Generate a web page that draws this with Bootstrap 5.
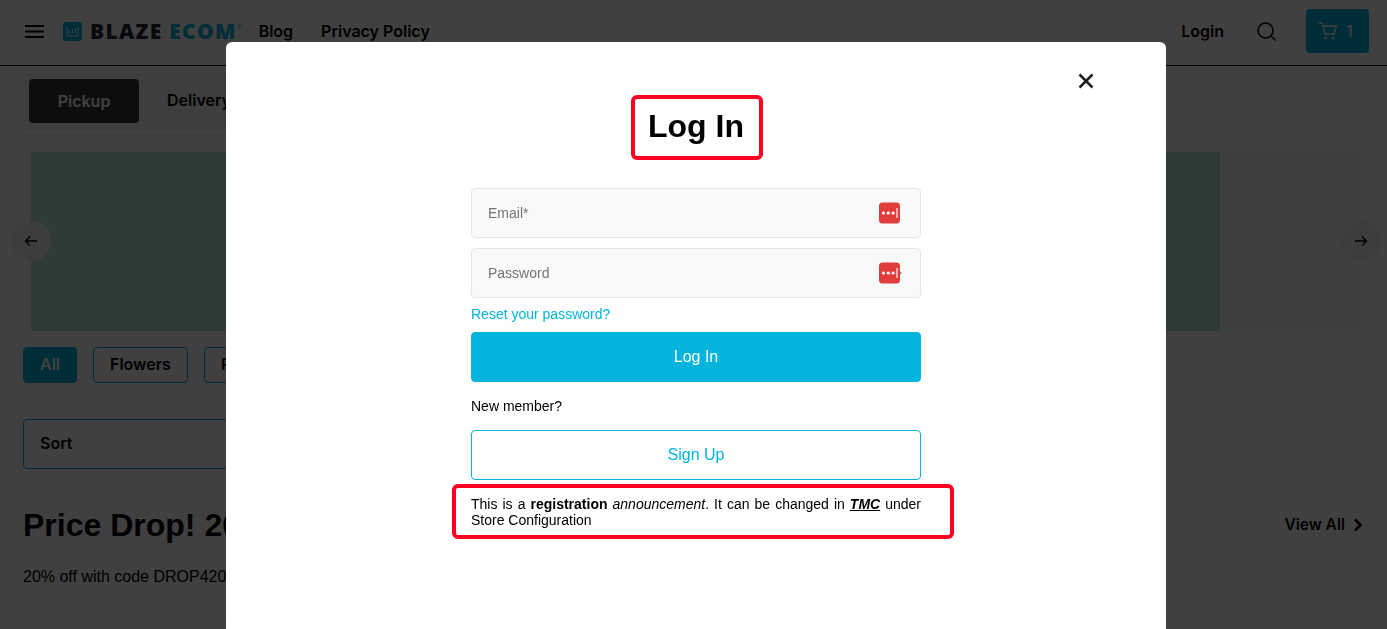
<!DOCTYPE html>
<html lang="en">
<head>
  <meta charset="UTF-8">
  <title>Blaze Ecom – Log In</title>
  <link href="https://cdn.jsdelivr.net/npm/bootstrap@5.3.0/dist/css/bootstrap.min.css" rel="stylesheet">
  <style>
    html, body { height: 100%; overflow: hidden; }
    body {
      background: #fff;
      color: #000;
      font-family: "Liberation Sans", Arial, sans-serif;
      font-size: 14px;
    }

    /* page behind the dialog */
    .top-bar {
      height: 66px;
      padding: 0 18px 3px 25px;
      border-bottom: 1px solid #000;
      font-family: Inter, sans-serif;
      font-weight: 600;
      font-size: 16px;
    }
    .top-bar a { color: #000; text-decoration: none; }
    .brand-text {
      font-family: "Open Sans", sans-serif;
      font-weight: 800;
      font-size: 21px;
      letter-spacing: 1.300px;
      line-height: 1;
      color: #1b2a33;
      white-space: nowrap;
    }
    .brand-text span { color: #03b5dc; }
    .brand-text sup { font-size: 6px; top: -1.6em; letter-spacing: 0; font-weight: 400; color: #03b5dc; }
    .logo-box { width: 19px; height: 19px; border-radius: 3px; background: #03b5dc; margin: 0 8px 0 19px; }
    .blog-link { margin-left: 17px; }
    .policy-link { margin-left: 28px; }
    .login-link { margin-right: 33px; }
    .search-icon { margin-right: 30px; }
    .cart-btn {
      width: 63px;
      height: 44px;
      padding-right: 4px;
      background: #03b5dc;
      color: #fff;
      border-radius: 4px;
      font-weight: 400;
    }
    .sub-bar {
      height: 70px;
      padding: 7px 23px;
      border-bottom: 1px solid #f0f0f0;
      font-family: Inter, sans-serif;
      font-weight: 600;
      font-size: 16px;
    }
    .order-tabs { background: #f8f8f8; padding: 6px; border-radius: 4px; width: 400px; height: 56px; }
    .tab-active {
      width: 110px;
      height: 44px;
      padding-bottom: 1px;
      background: #363636;
      color: #fff;
      border-radius: 4px;
    }
    .tab-plain { margin: 0 0 2px 28px; }
    .hero {
      position: relative;
      height: 179px;
      margin: 16px 26px 0 31px;
      background: #fbfcfb;
      display: flex;
    }
    .hero-art { width: 1189px; background: #b8f0d2; }
    .hero-arrow {
      position: absolute;
      top: 69px;
      width: 40px;
      height: 40px;
      border-radius: 50%;
      background: #f2f2f2;
    }
    .arrow-prev { left: -20px; }
    .arrow-next { right: -20px; }
    .chip-row { padding: 16px 23px 0; font-family: Inter, sans-serif; font-weight: 600; font-size: 16px; gap: 16px; }
    .chip {
      height: 36px;
      padding: 0 16px 2px;
      border: 1px solid #03b5dc;
      border-radius: 4px;
    }
    .chip-on { width: 54px; padding: 0 0 2px; background: #03b5dc; color: #fff; }
    .sort-box {
      width: 400px;
      height: 50px;
      margin: 36px 0 0 23px;
      padding: 0 0 2px 16px;
      border: 1px solid #03b5dc;
      border-radius: 4px;
      font-family: Inter, sans-serif;
      font-weight: 600;
      font-size: 16px;
    }
    .promo-head { margin: 36px 24px 0 23px; height: 40px; }
    .promo-head h2 { font-size: 32px; font-weight: 700; margin: 0; line-height: 40px; }
    .view-all { font-family: Inter, sans-serif; font-weight: 600; font-size: 15.500px; gap: 8px; }
    .promo-note { margin: 20px 0 0 23px; font-size: 16px; line-height: 24px; }
    .next-card { margin: 27px 23px 0; border-top: 1px solid #f4f4f4; }

    /* log in dialog */
    .modal-backdrop.show { opacity: .75; }
    .login-modal { display: block; }
    .login-dialog {
      width: 940px;
      max-width: 940px;
      margin: 42px 0 0 226px;
    }
    .login-sheet {
      position: relative;
      height: 700px;
      padding-top: 53px;
      border: 0;
      border-radius: 6px;
    }
    .close-x { position: absolute; top: 30px; right: 71px; padding: 0; border: 0; background: none; line-height: 0; }
    .login-title {
      width: 132px;
      height: 65px;
      margin: 0 auto 28px;
      padding-right: 2px;
      border: 4px solid #ff0022;
      border-radius: 6px;
      font-size: 32px;
      font-weight: 700;
      line-height: 55px;
      text-align: center;
      position: relative;
      left: 1px;
    }
    .login-form { width: 450px; margin: 0 auto; }
    .field-wrap { position: relative; margin-bottom: 10px; }
    .field-wrap .form-control {
      height: 50px;
      padding-left: 16px;
      background: #f9f9f9;
      border: 1px solid #e6e6e6;
      border-radius: 4px;
      font-size: 14px;
    }
    .field-wrap .form-control::placeholder { color: #757575; opacity: 1; }
    .pass-icon { position: absolute; top: 14px; right: 20px; }
    .pass-icon-wide { right: 18px; }
    .reset-link { display: block; margin-top: -2px; line-height: 16px; color: #03b5dc; text-decoration: none; }
    .btn-login, .btn-signup {
      display: block;
      width: 100%;
      height: 50px;
      font-size: 16px;
      border-radius: 4px;
    }
    .btn-login { margin-top: 10px; background: #03b5dc; border: 1px solid #03b5dc; color: #fff; }
    .btn-signup { background: #fff; border: 1px solid #03b5dc; color: #03b5dc; }
    .member-line { margin: 16px 0; line-height: 16px; }
    .announce {
      width: 502px;
      margin: 4px 0 0 -19px;
      padding: 8px 29px 7px 15px;
      border: 4px solid #ff0022;
      border-radius: 6px;
      line-height: 16px;
      text-align: justify;
    }
    .announce a { color: #000; font-weight: 700; font-style: italic; }
  </style>
</head>
<body>
  <header class="top-bar d-flex align-items-center">
    <svg width="19" height="13" viewBox="0 0 19 13" aria-hidden="true"><path d="M0 1h19M0 6.500h19M0 12h19" stroke="#000" stroke-width="1.800"/></svg>
    <div class="logo-box d-flex align-items-center justify-content-center">
      <svg width="13" height="13" viewBox="0 0 13 13" aria-hidden="true"><path d="M1 2v9h11V2M3.500 8V6M6.500 8V4M9.500 8V3" stroke="#fff" fill="none" stroke-width="1"/></svg>
    </div>
    <div class="brand-text">BLAZE <span>ECOM<sup>®</sup></span></div>
    <a href="#" class="blog-link">Blog</a>
    <a href="#" class="policy-link">Privacy Policy</a>
    <a href="#" class="login-link ms-auto">Login</a>
    <svg class="search-icon" width="19" height="19" viewBox="0 0 19 19" aria-hidden="true"><circle cx="8.500" cy="8.500" r="7.500" fill="none" stroke="#000" stroke-width="1.500"/><path d="M14 14l4 4" stroke="#000" stroke-width="1.500" stroke-linecap="round"/></svg>
    <div class="cart-btn d-flex align-items-center justify-content-center gap-2">
      <svg width="20" height="18" viewBox="0 0 20 18" aria-hidden="true"><path d="M1 1h3l3 11h9l2.500-8H5" fill="none" stroke="#fff" stroke-width="1.300" stroke-linejoin="round"/><circle cx="7.500" cy="16" r="1.300" fill="#fff"/><circle cx="15" cy="16" r="1.300" fill="#fff"/></svg>
      <span>1</span>
    </div>
  </header>

  <div class="sub-bar">
    <div class="order-tabs d-flex align-items-center">
      <div class="tab-active d-flex align-items-center justify-content-center">Pickup</div>
      <div class="tab-plain">Delivery</div>
    </div>
  </div>

  <div class="hero">
    <div class="hero-art"></div>
    <div class="hero-arrow arrow-prev d-flex align-items-center justify-content-center">
      <svg width="14" height="12" viewBox="0 0 14 12" aria-hidden="true"><path d="M13 6H1.500M6 1.500L1.500 6 6 10.500" fill="none" stroke="#000" stroke-width="1.300"/></svg>
    </div>
    <div class="hero-arrow arrow-next d-flex align-items-center justify-content-center">
      <svg width="14" height="12" viewBox="0 0 14 12" aria-hidden="true"><path d="M1 6h11.500M8 1.500L12.500 6 8 10.500" fill="none" stroke="#000" stroke-width="1.300"/></svg>
    </div>
  </div>

  <div class="chip-row d-flex">
    <div class="chip chip-on d-flex align-items-center justify-content-center">All</div>
    <div class="chip d-flex align-items-center">Flowers</div>
    <div class="chip d-flex align-items-center">Pre-Rolls</div>
  </div>

  <div class="sort-box d-flex align-items-center">Sort</div>

  <div class="promo-head d-flex align-items-center justify-content-between">
    <h2>Price Drop! 20% Off</h2>
    <div class="view-all d-flex align-items-center">
      <span>View All</span>
      <svg width="10" height="14" viewBox="0 0 10 14" aria-hidden="true"><path d="M2 1.500L7.500 7 2 12.500" fill="none" stroke="#000" stroke-width="2.600"/></svg>
    </div>
  </div>
  <p class="promo-note">20% off with code DROP420</p>
  <div class="next-card"></div>

  <div class="modal-backdrop show"></div>
  <div class="modal login-modal" tabindex="-1">
    <div class="modal-dialog login-dialog">
      <div class="modal-content login-sheet">
        <button type="button" class="close-x" aria-label="Close">
          <svg width="18" height="18" viewBox="0 0 18 18" aria-hidden="true"><path d="M2.500 2.500l13 13M15.500 2.500l-13 13" stroke="#1e1e1e" stroke-width="2.500"/></svg>
        </button>
        <h1 class="login-title">Log In</h1>
        <form class="login-form">
          <div class="field-wrap">
            <input class="form-control" placeholder="Email*" type="text">
            <svg class="pass-icon" width="22" height="22" viewBox="0 0 22 22" aria-hidden="true"><rect width="21" height="21" y=".5" rx="3.500" fill="#e23d3d"/><circle cx="4.500" cy="11" r="1.600" fill="#fff"/><circle cx="9.300" cy="11" r="1.600" fill="#fff"/><circle cx="14.100" cy="11" r="1.600" fill="#fff"/><path d="M18 6v10" stroke="#fff" stroke-width="1.100"/></svg>
          </div>
          <div class="field-wrap">
            <input class="form-control" placeholder="Password" type="password">
            <svg class="pass-icon pass-icon-wide" width="24" height="22" viewBox="0 0 24 22" aria-hidden="true"><rect width="21" height="21" y=".5" rx="3.500" fill="#e23d3d"/><circle cx="4.500" cy="11" r="1.600" fill="#fff"/><circle cx="9.300" cy="11" r="1.600" fill="#fff"/><circle cx="14.100" cy="11" r="1.600" fill="#fff"/><path d="M18 6v10" stroke="#fff" stroke-width="1.100"/><path d="M21 9l1.800 2-1.800 2z" fill="#8a8a8a"/></svg>
          </div>
          <a href="#" class="reset-link">Reset your password?</a>
          <button type="button" class="btn btn-login">Log In</button>
          <p class="member-line">New member?</p>
          <button type="button" class="btn btn-signup">Sign Up</button>
          <div class="announce">This is a <strong>registration</strong> <em>announcement</em>. It can be changed in <a href="#">TMC</a> under Store Configuration</div>
        </form>
      </div>
    </div>
  </div>

  <script src="https://cdn.jsdelivr.net/npm/bootstrap@5.3.0/dist/js/bootstrap.bundle.min.js"></script>
</body>
</html>
